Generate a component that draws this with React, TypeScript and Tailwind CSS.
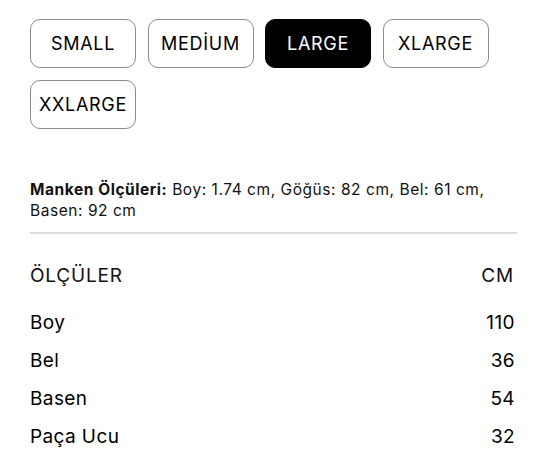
import React from "react";

const sizes = ["SMALL", "MEDİUM", "LARGE", "XLARGE", "XXLARGE"];
const rows: [string, string][] = [
  ["Boy", "110"],
  ["Bel", "36"],
  ["Basen", "54"],
  ["Paça Ucu", "32"],
];

export default function App() {
  return (
    <div
      className="w-[545px] min-h-[464px] bg-white pl-[30px] pr-[28px] pt-[19px] text-[#111]"
      style={{ fontFamily: 'Inter, "Noto Sans", Arial, sans-serif' }}
    >
      <div className="flex flex-wrap gap-x-[11.5px] gap-y-[12px]">
        {sizes.map((s) => {
          const active = s === "LARGE";
          return (
            <button
              key={s}
              className={
                active
                  ? "w-[106px] h-[49px] rounded-[10px] border border-black bg-black text-white text-[18px] tracking-[0.7px] flex items-center justify-center"
                  : "w-[106px] h-[49px] rounded-[10px] border border-[#8c8c8c] bg-white text-black text-[18px] tracking-[0.7px] flex items-center justify-center"
              }
            >
              {s}
            </button>
          );
        })}
      </div>
      <p className="mt-[50px] text-[15.5px] leading-[21px] tracking-[0.55px] text-[#111]">
        <b className="font-bold">Manken Ölçüleri:</b> Boy: 1.74 cm, Göğüs: 82 cm, Bel: 61 cm,
        <br />
        Basen: 92 cm
      </p>
      <div className="mt-[11px] h-[2px] bg-[#dcdcdc]" />
      <div className="mt-[30px] flex justify-between text-[19px] leading-[24px] tracking-[0.8px]">
        <span>ÖLÇÜLER</span>
        <span className="mr-[3px]">CM</span>
      </div>
      <div className="mt-[23px] flex flex-col gap-[14px]">
        {rows.map(([k, v]) => (
          <div key={k} className="flex justify-between text-[19px] leading-[24px] font-normal text-black tracking-[0.4px]">
            <span>{k}</span>
            <span className="mr-[2px]">{v}</span>
          </div>
        ))}
      </div>
    </div>
  );
}
